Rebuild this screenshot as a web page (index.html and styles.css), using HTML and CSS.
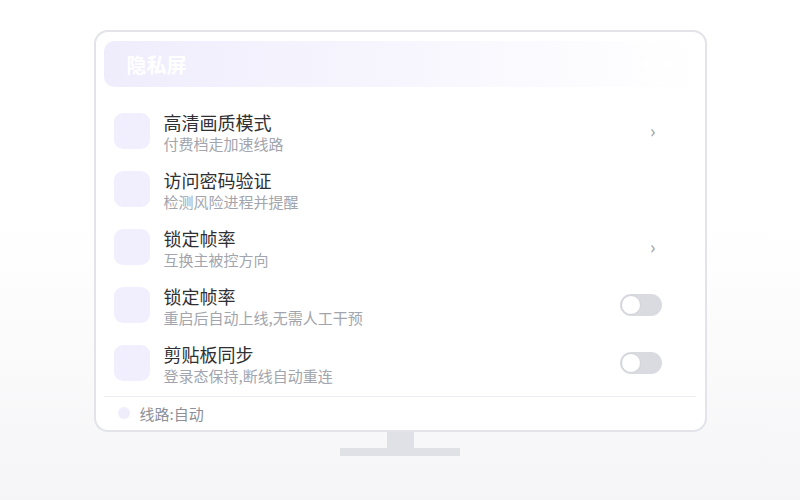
FILE: index.html
```html
<!DOCTYPE html>
<html lang="zh-CN">
<head>
    <meta charset="UTF-8">
    <meta name="viewport" content="width=device-width, initial-scale=1.0">
    <title>隐私屏</title>
    <link rel="stylesheet" href="styles.css">
</head>
<body>

    <div class="monitor">
        <div class="screen">
            <div class="screen-head">
                <span class="screen-title">隐私屏</span>
                <span class="dots"><i></i><i></i><i></i></span>
            </div>

            <div class="list">
                <div class="row">
                    <div class="icon"></div>
                    <div class="text">
                        <div class="title">高清画质模式</div>
                        <div class="sub">付费档走加速线路</div>
                    </div>
                    <span class="chevron">›</span>
                </div>
                <div class="row">
                    <div class="icon"></div>
                    <div class="text">
                        <div class="title">访问密码验证</div>
                        <div class="sub">检测风险进程并提醒</div>
                    </div>
                </div>
                <div class="row">
                    <div class="icon"></div>
                    <div class="text">
                        <div class="title">锁定帧率</div>
                        <div class="sub">互换主被控方向</div>
                    </div>
                    <span class="chevron">›</span>
                </div>
                <div class="row">
                    <div class="icon"></div>
                    <div class="text">
                        <div class="title">锁定帧率</div>
                        <div class="sub">重启后自动上线,无需人工干预</div>
                    </div>
                    <span class="toggle"></span>
                </div>
                <div class="row">
                    <div class="icon"></div>
                    <div class="text">
                        <div class="title">剪贴板同步</div>
                        <div class="sub">登录态保持,断线自动重连</div>
                    </div>
                    <span class="toggle"></span>
                </div>
            </div>

            <div class="footer">
                <span class="dot"></span>
                <span class="route">线路:自动</span>
            </div>
        </div>
        <div class="neck"></div>
        <div class="base"></div>
    </div>

</body>
</html>
```

FILE: styles.css
```css
body {
    font-family: "Noto Sans CJK SC", "Noto Sans", sans-serif;
    background: linear-gradient(#ffffff 0%, #ffffff 45%, #f5f5f7 100%);
    margin: 0;
    padding-top: 30px;
    height: 470px;
    overflow: hidden;
}
.monitor {
    width: 613px;
    margin: 0 auto;
    display: flex;
    flex-direction: column;
    align-items: center;
}
.screen {
    box-sizing: border-box;
    width: 613px;
    height: 402px;
    background: #fff;
    border: 2px solid #e2e4e9;
    border-radius: 14px;
    padding: 9px 9px 0 8px;
    display: flex;
    flex-direction: column;
}
.screen-head {
    height: 46px;
    border-radius: 10px;
    background: linear-gradient(90deg, #efedfc 0%, #f7f6fe 50%, #ffffff 100%);
    display: flex;
    align-items: center;
    justify-content: space-between;
    padding: 0 24px 0 23px;
}
.screen-title {
    color: #fff;
    font-size: 20px;
    font-weight: bold;
}
.dots {
    display: flex;
    gap: 6px;
}
.dots i {
    width: 6px;
    height: 6px;
    border-radius: 50%;
    background: #fff;
}
.list {
    margin-top: 15px;
    display: flex;
    flex-direction: column;
}
.row {
    height: 58px;
    display: flex;
    align-items: center;
    padding: 0 34px 0 10px;
}
.icon {
    width: 36px;
    height: 36px;
    border-radius: 9px;
    background: #f1effd;
    flex-shrink: 0;
}
.text {
    flex: 1;
    margin-left: 14px;
    padding-top: 3px;
}
.title {
    font-size: 18px;
    line-height: 23px;
    color: #2f3033;
}
.sub {
    font-size: 15px;
    line-height: 20px;
    color: #a2a5ad;
}
.chevron {
    color: #9a9ca3;
    font-size: 18px;
    margin-right: 6px;
    margin-top: -2px;
}
.toggle {
    position: relative;
    width: 42px;
    height: 22px;
    border-radius: 11px;
    background: #d9dbe1;
}
.toggle::after {
    content: "";
    position: absolute;
    left: 1px;
    top: 1px;
    width: 18px;
    height: 18px;
    border-radius: 50%;
    background: #fff;
    border: 1px solid #d0d2d8;
}
.footer {
    margin-top: 4px;
    border-top: 1px solid #eceef1;
    height: 32px;
    display: flex;
    align-items: center;
    padding-left: 14px;
}
.dot {
    width: 12px;
    height: 12px;
    border-radius: 50%;
    background: #efedfc;
}
.route {
    margin-left: 10px;
    font-size: 15px;
    color: #8d9098;
}
.neck {
    width: 27px;
    height: 16px;
    background: #dfe1e6;
}
.base {
    width: 120px;
    height: 8px;
    background: #dfe1e6;
}
```
